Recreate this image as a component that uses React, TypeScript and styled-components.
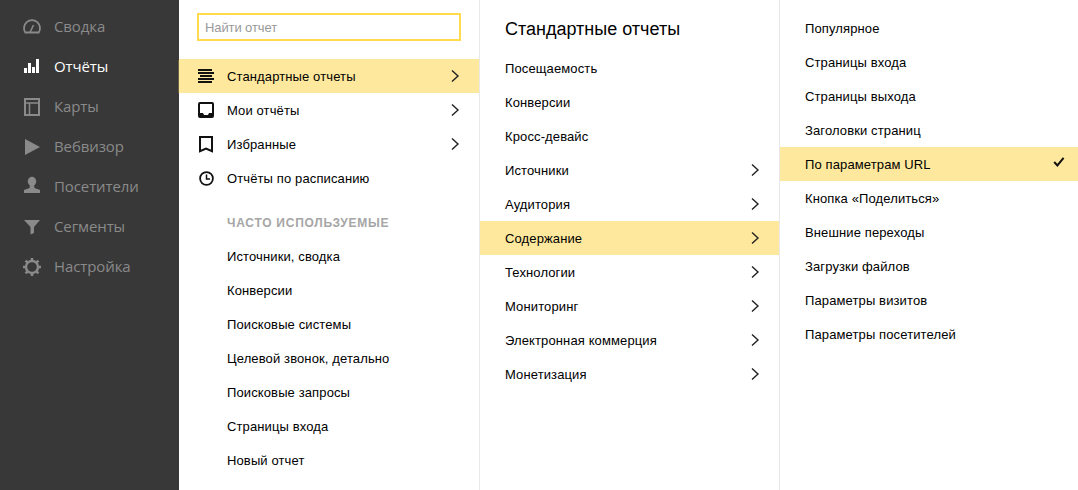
import React from "react";
import styled, { createGlobalStyle } from "styled-components";

const GlobalStyle = createGlobalStyle`
  html, body {
    margin: 0;
    padding: 0;
    background: #fff;
  }
  body {
    font-family: "Liberation Sans", Arial, sans-serif;
    color: #000;
  }
`;

const Page = styled.div`
  display: flex;
  width: 1078px;
  height: 490px;
  overflow: hidden;
`;

const Sidebar = styled.nav`
  position: relative;
  flex: 0 0 179px;
  background: #383838;
  padding-top: 6px;
  box-sizing: border-box;
`;

const SideMark = styled.div`
  position: absolute;
  right: 0;
  top: 60px;
  width: 1px;
  height: 33px;
  background: #6b6242;
`;

const SideItem = styled.div<{ $active?: boolean }>`
  display: flex;
  align-items: center;
  height: 40px;
  padding-left: 22px;
  font-family: "Open Sans", sans-serif;
  font-size: 15px;
  letter-spacing: -0.1px;
  color: ${(p) => (p.$active ? "#fff" : "#8a8a8a")};
  svg {
    flex: 0 0 20px;
    width: 20px;
    height: 20px;
    margin-right: 12px;
  }
`;

const Column = styled.section<{ $width: number; $last?: boolean }>`
  flex: 0 0 ${(p) => p.$width}px;
  box-sizing: border-box;
  border-right: ${(p) => (p.$last ? "none" : "1px solid #e8e8e8")};
`;

const SearchWrap = styled.div`
  padding: 13px 18px 18px 18px;
`;

const SearchInput = styled.input`
  display: block;
  width: 100%;
  height: 28px;
  box-sizing: border-box;
  border: 2px solid #ffdb4d;
  outline: none;
  padding: 0 6px;
  font: 13px "Liberation Sans", Arial, sans-serif;
  letter-spacing: -0.1px;
  &::placeholder {
    color: #999;
    opacity: 1;
  }
`;

const Row = styled.div<{ $selected?: boolean; $pad?: number; $end?: number }>`
  display: flex;
  align-items: center;
  height: 34px;
  padding-left: ${(p) => p.$pad ?? 25}px;
  padding-right: ${(p) => p.$end ?? 19}px;
  font-size: 13px;
  letter-spacing: 0.12px;
  background: ${(p) => (p.$selected ? "#fee89d" : "transparent")};
`;

const RowIcon = styled.span`
  display: flex;
  flex: 0 0 30px;
  margin-left: -6px;
  margin-right: 6px;
  justify-content: center;
  width: 30px;
  svg {
    display: block;
  }
`;

const RowLabel = styled.span`
  flex: 1;
  white-space: nowrap;
`;

const SectionTitle = styled.div`
  margin-top: 12px;
  height: 32px;
  line-height: 32px;
  padding-left: 48px;
  font-size: 12px;
  font-weight: 700;
  letter-spacing: 0.75px;
  color: #a6a6a6;
`;

const ColumnTitle = styled.h2`
  margin: 0;
  padding: 17px 0 0 25px;
  height: 51px;
  box-sizing: border-box;
  font-size: 18px;
  line-height: 24px;
  font-weight: 400;
`;

const CheckIcon = styled.svg`
  margin-bottom: 4px;
`;

const Chevron = () => (
  <svg width="10" height="14" viewBox="0 0 10 14" fill="none">
    <path d="M2 1.500 8 7 2 12.500" stroke="#222" strokeWidth="1.400" />
  </svg>
);

const Check = () => (
  <CheckIcon width="12" height="10" viewBox="0 0 12 10" fill="none">
    <path d="M1.200 5 4.400 8.400 10.600.800" stroke="#111" strokeWidth="2" />
  </CheckIcon>
);

const sideItems = [
  {
    label: "Сводка",
    icon: (
      <svg viewBox="0 0 20 20" fill="none" stroke="#8a8a8a">
        <path d="M3.300 16.500A8 8 0 1 1 16.700 16.500Z" strokeWidth="1.800" />
        <path d="M8 16.500 11.500 9" strokeWidth="1.600" />
      </svg>
    ),
  },
  {
    label: "Отчёты",
    active: true,
    icon: (
      <svg viewBox="0 0 20 20" fill="#fff">
        <rect x="2" y="12" width="3" height="5" />
        <rect x="6" y="7" width="3" height="10" />
        <rect x="10" y="11" width="3" height="6" />
        <rect x="14" y="3" width="3" height="14" />
      </svg>
    ),
  },
  {
    label: "Карты",
    icon: (
      <svg viewBox="0 0 20 20" fill="none" stroke="#8a8a8a">
        <rect x="3" y="3" width="14" height="16" strokeWidth="2" />
        <path d="M3 7H17M7.500 7V19" strokeWidth="1.500" />
      </svg>
    ),
  },
  {
    label: "Вебвизор",
    icon: (
      <svg viewBox="0 0 20 20" fill="#8a8a8a">
        <path d="M3 3 18 11 3 19Z" />
      </svg>
    ),
  },
  {
    label: "Посетители",
    icon: (
      <svg viewBox="0 0 20 20" fill="#8a8a8a">
        <ellipse cx="10" cy="5.500" rx="4.200" ry="4.700" />
        <path d="M8 9h4l.5 3 5.500 2v3H2v-3l5.500-2Z" />
      </svg>
    ),
  },
  {
    label: "Сегменты",
    icon: (
      <svg viewBox="0 0 20 20" fill="#8a8a8a">
        <path d="M2 4H18L12 11V17L8.500 18.500V11Z" />
      </svg>
    ),
  },
  {
    label: "Настройка",
    icon: (
      <svg viewBox="0 0 20 20" fill="none" stroke="#8a8a8a">
        <circle cx="10" cy="11" r="6" strokeWidth="2.400" />
        <path
          d="M10 2v3M10 17v3M1 11h3M16 11h3M3.600 4.600l2.200 2.200M14.200 15.200l2.200 2.200M3.600 17.400l2.200-2.200M14.200 6.800l2.200-2.200"
          strokeWidth="2.600"
        />
      </svg>
    ),
  },
];

const mainItems = [
  {
    label: "Стандартные отчеты",
    selected: true,
    arrow: true,
    icon: (
      <svg width="16" height="14" viewBox="0 0 16 14" fill="#111">
        <path d="M0 0h14v2H0ZM0 3h16v2H0ZM2 6h12v2H2ZM0 9h16v2H0ZM0 12h14v2H0Z" />
      </svg>
    ),
  },
  {
    label: "Мои отчёты",
    arrow: true,
    icon: (
      <svg width="16" height="16" viewBox="0 0 16 16" fill="#111">
        <path
          fillRule="evenodd"
          d="M2 0h12a2 2 0 0 1 2 2v12a2 2 0 0 1-2 2H2a2 2 0 0 1-2-2V2a2 2 0 0 1 2-2Zm0 2v9h3l1 2h4l1-2h3V2Z"
        />
      </svg>
    ),
  },
  {
    label: "Избранные",
    arrow: true,
    icon: (
      <svg width="14" height="17" viewBox="0 0 14 17" fill="none">
        <path d="M1 1H13V15.200L7 12.500 1 15.200Z" stroke="#111" strokeWidth="2" />
      </svg>
    ),
  },
  {
    label: "Отчёты по расписанию",
    icon: (
      <svg width="15" height="15" viewBox="0 0 15 15" fill="none" stroke="#111">
        <circle cx="7.500" cy="7.500" r="6.400" strokeWidth="1.800" />
        <path d="M7.500 3.500V8H11" strokeWidth="1.500" />
      </svg>
    ),
  },
];

const frequent = [
  "Источники, сводка",
  "Конверсии",
  "Поисковые системы",
  "Целевой звонок, детально",
  "Поисковые запросы",
  "Страницы входа",
  "Новый отчет",
];

const standard = [
  { label: "Посещаемость" },
  { label: "Конверсии" },
  { label: "Кросс-девайс" },
  { label: "Источники", arrow: true },
  { label: "Аудитория", arrow: true },
  { label: "Содержание", arrow: true, selected: true },
  { label: "Технологии", arrow: true },
  { label: "Мониторинг", arrow: true },
  { label: "Электронная коммерция", arrow: true },
  { label: "Монетизация", arrow: true },
];

const content = [
  { label: "Популярное" },
  { label: "Страницы входа" },
  { label: "Страницы выхода" },
  { label: "Заголовки страниц" },
  { label: "По параметрам URL", selected: true },
  { label: "Кнопка «Поделиться»" },
  { label: "Внешние переходы" },
  { label: "Загрузки файлов" },
  { label: "Параметры визитов" },
  { label: "Параметры посетителей" },
];

const ContentList = styled.div`
  padding-top: 11px;
`;

const App: React.FC = () => {
  return (
    <Page>
      <GlobalStyle />
      <Sidebar>
        <SideMark />
        {sideItems.map((item) => (
          <SideItem key={item.label} $active={item.active}>
            {item.icon}
            {item.label}
          </SideItem>
        ))}
      </Sidebar>

      <Column $width={301}>
        <SearchWrap>
          <SearchInput placeholder="Найти отчет" />
        </SearchWrap>
        {mainItems.map((item) => (
          <Row key={item.label} $selected={item.selected} $pad={18}>
            <RowIcon>{item.icon}</RowIcon>
            <RowLabel>{item.label}</RowLabel>
            {item.arrow && <Chevron />}
          </Row>
        ))}
        <SectionTitle>ЧАСТО ИСПОЛЬЗУЕМЫЕ</SectionTitle>
        {frequent.map((label) => (
          <Row key={label} $pad={48}>
            <RowLabel>{label}</RowLabel>
          </Row>
        ))}
      </Column>

      <Column $width={300}>
        <ColumnTitle>Стандартные отчеты</ColumnTitle>
        {standard.map((item) => (
          <Row key={item.label} $selected={item.selected}>
            <RowLabel>{item.label}</RowLabel>
            {item.arrow && <Chevron />}
          </Row>
        ))}
      </Column>

      <Column $width={298} $last>
        <ContentList>
          {content.map((item) => (
            <Row key={item.label} $selected={item.selected} $end={13}>
              <RowLabel>{item.label}</RowLabel>
              {item.selected && <Check />}
            </Row>
          ))}
        </ContentList>
      </Column>
    </Page>
  );
};

export default App;
